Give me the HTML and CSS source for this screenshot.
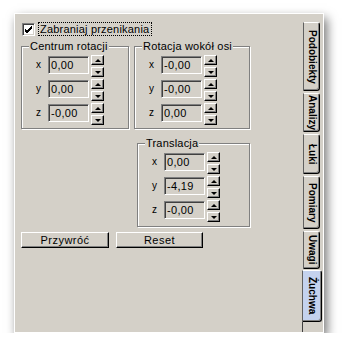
FILE: index.html
```html
<!DOCTYPE html>
<html lang="pl">
<head>
    <meta charset="UTF-8">
    <title>Żuchwa</title>
    <link rel="stylesheet" href="styles.css">
</head>
<body>
    <div class="window">
        <div class="content">
            <label class="check-row">
                <span class="checkbox">
                    <svg width="9" height="9" viewBox="0 0 9 9"><path d="M1 4 L3 6 L8 1 M1 5 L3 7 L8 2 M1 6 L3 8 L8 3" stroke="#000" stroke-width="1" fill="none"/></svg>
                </span>
                <span class="check-label">Zabraniaj przenikania</span>
            </label>

            <div class="groups">
                <div class="group group-center">
                    <span class="legend">Centrum rotacji</span>
                    <div class="row"><span class="axis">x</span><span class="field">0,00</span><span class="spin"><span class="up"></span><span class="down"></span></span></div>
                    <div class="row"><span class="axis">y</span><span class="field">0,00</span><span class="spin"><span class="up"></span><span class="down"></span></span></div>
                    <div class="row"><span class="axis">z</span><span class="field">-0,00</span><span class="spin"><span class="up"></span><span class="down"></span></span></div>
                </div>
                <div class="group group-rot">
                    <span class="legend">Rotacja wokół osi</span>
                    <div class="row"><span class="axis">x</span><span class="field">-0,00</span><span class="spin"><span class="up"></span><span class="down"></span></span></div>
                    <div class="row"><span class="axis">y</span><span class="field">-0,00</span><span class="spin"><span class="up"></span><span class="down"></span></span></div>
                    <div class="row"><span class="axis">z</span><span class="field">0,00</span><span class="spin"><span class="up"></span><span class="down"></span></span></div>
                </div>
            </div>

            <div class="group group-trans">
                <span class="legend">Translacja</span>
                <div class="row"><span class="axis">x</span><span class="field">0,00</span><span class="spin"><span class="up"></span><span class="down"></span></span></div>
                <div class="row"><span class="axis">y</span><span class="field">-4,19</span><span class="spin"><span class="up"></span><span class="down"></span></span></div>
                <div class="row"><span class="axis">z</span><span class="field">-0,00</span><span class="spin"><span class="up"></span><span class="down"></span></span></div>
            </div>

            <div class="buttons">
                <button class="btn btn-restore">Przywróć</button>
                <button class="btn btn-reset">Reset</button>
            </div>
        </div>

        <div class="tabs">
            <div class="tab tab-podobiekty"><span>Podobiekty</span></div>
            <div class="tab tab-analizy"><span>Analizy</span></div>
            <div class="tab tab-luki"><span>Łuki</span></div>
            <div class="tab tab-pomiary"><span>Pomiary</span></div>
            <div class="tab tab-uwagi"><span>Uwagi</span></div>
            <div class="tab tab-zuchwa active"><span>Żuchwa</span></div>
            <div class="tab-rest"></div>
        </div>
    </div>
</body>
</html>
```

FILE: styles.css
```css
body {
    margin: 0;
    background-color: #fff;
    font-family: 'Liberation Sans', Arial, sans-serif;
    font-size: 11px;
    color: #000;
}

.window {
    margin: 13px 0 0 14px;
    width: 308px;
    height: 318px;
    border: 1px solid #fff;
    background-color: #d4d0c8;
    box-shadow: 3px 5px 10px rgba(0, 0, 0, 0.55);
    display: flex;
}

.content {
    width: 287px;
    padding: 8px 0 0 6px;
    box-sizing: border-box;
}

/* checkbox */
.check-row {
    display: flex;
    align-items: center;
    height: 14px;
    margin-left: 1px;
}

.checkbox {
    width: 13px;
    height: 13px;
    box-sizing: border-box;
    border: 1px solid;
    border-color: #808080 #fff #fff #808080;
    box-shadow: inset 1px 1px 0 #404040, inset -1px -1px 0 #d4d0c8;
    background-color: #fff;
    display: flex;
    align-items: center;
    justify-content: center;
}

.check-label {
    margin-left: 3px;
    height: 14px;
    line-height: 12px;
    padding: 0 2px 0 1px;
    box-sizing: border-box;
    border: 1px dotted #000;
    letter-spacing: 0.2px;
}

/* groups */
.groups {
    display: flex;
    margin-top: 10px;
}

.group {
    position: relative;
    box-sizing: border-box;
    border: 1px solid #808080;
    box-shadow: inset 1px 1px 0 #fff, 1px 1px 0 #fff;
    padding: 8px 0 0 14px;
    display: flex;
    flex-direction: column;
    gap: 2px;
}

.legend {
    position: absolute;
    top: -7px;
    left: 7px;
    padding: 0 1px;
    line-height: 12px;
    letter-spacing: 0.2px;
    background-color: #d4d0c8;
}

.group-center {
    width: 108px;
    height: 83px;
}

.group-rot {
    width: 116px;
    height: 83px;
    margin-left: 5px;
}

.group-trans {
    width: 113px;
    height: 84px;
    margin: 14px 0 0 116px;
}

.row {
    display: flex;
    align-items: flex-start;
    height: 22px;
}

.axis {
    width: 12px;
    line-height: 20px;
    font-size: 10px;
}

.field {
    width: 41px;
    height: 18px;
    margin-top: 1px;
    box-sizing: border-box;
    border: 1px solid;
    border-color: #808080 #fff #fff #808080;
    box-shadow: inset 1px 1px 0 #404040;
    padding-left: 2px;
    line-height: 16px;
    letter-spacing: 0.3px;
}

.spin {
    margin-left: 2px;
    display: flex;
    flex-direction: column;
    gap: 2px;
}

.up,
.down {
    width: 13px;
    height: 10px;
    box-sizing: border-box;
    border: 1px solid;
    border-color: #fff #000 #000 #fff;
    box-shadow: inset -1px -1px 0 #808080;
    display: flex;
    align-items: center;
    justify-content: center;
}

.up::after,
.down::after {
    content: "";
    width: 0;
    height: 0;
    border-left: 3px solid transparent;
    border-right: 3px solid transparent;
}

.up::after {
    border-bottom: 3px solid #000;
}

.down::after {
    border-top: 3px solid #000;
}

/* buttons */
.buttons {
    display: flex;
    gap: 7px;
    margin-top: 5px;
}

.btn {
    height: 16px;
    padding: 0;
    font-family: inherit;
    font-size: 11px;
    letter-spacing: 0.5px;
    color: #000;
    background-color: #d4d0c8;
    border: 1px solid;
    border-color: #fff #000 #000 #fff;
    box-shadow: inset -1px -1px 0 #808080;
    line-height: 12px;
}

.btn-restore {
    width: 88px;
}

.btn-reset {
    width: 87px;
}

/* tabs */
.tabs {
    width: 21px;
    padding-top: 8px;
    box-sizing: border-box;
    display: flex;
    flex-direction: column;
    align-items: flex-start;
    gap: 2px;
}

.tab {
    flex-shrink: 0;
    width: 17px;
    margin-left: 1px;
    box-sizing: border-box;
    border: 1px solid;
    border-color: #fff #000 #000 #606060;
    border-radius: 0 3px 3px 0;
    box-shadow: inset -1px -1px 0 #808080;
    display: flex;
    align-items: center;
    justify-content: center;
    overflow: hidden;
    font-size: 10px;
    font-weight: bold;
}

.tab span {
    writing-mode: vertical-rl;
    line-height: 14px;
}

.tab-podobiekty { height: 69px; }
.tab-analizy { height: 39px; }
.tab-luki { height: 40px; }
.tab-pomiary { height: 53px; }
.tab-uwagi { height: 38px; }

.tab.active {
    width: 20px;
    margin-left: 0;
    height: 52px;
    margin-top: -1px;
    background-color: #c4d2ee;
}

.tab-rest {
    flex: 1;
    margin-top: -2px;
    border-left: 1px solid #404040;
}
```
